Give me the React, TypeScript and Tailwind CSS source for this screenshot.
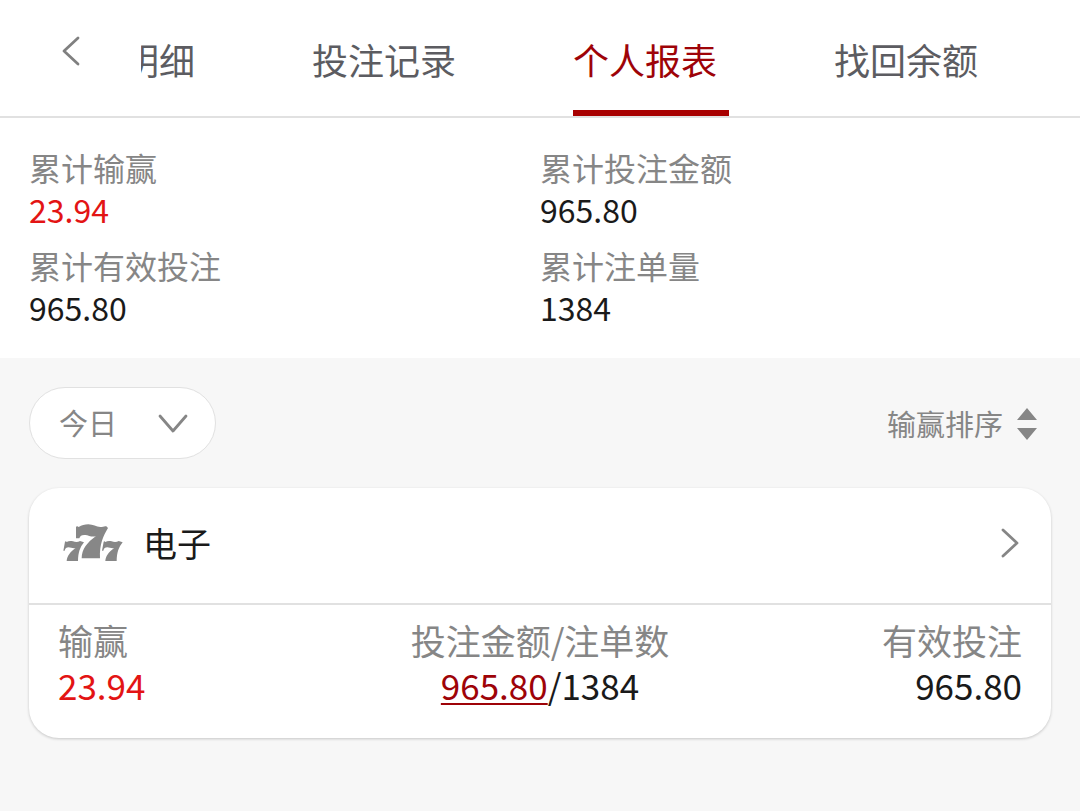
import { useState } from "react"
import clsx from "clsx"

const tabs = ["明细", "投注记录", "个人报表", "找回余额"]

const summary = [
  { label: "累计输赢", value: "23.94", highlight: true },
  { label: "累计投注金额", value: "965.80" },
  { label: "累计有效投注", value: "965.80" },
  { label: "累计注单量", value: "1384" },
]

interface ChevronProps {
  points: string
  viewBox: string
  className?: string
}

function Chevron({ points, viewBox, className = "" }: ChevronProps) {
  return (
    <svg viewBox={viewBox} className={className} fill="none" stroke="currentColor" aria-hidden="true">
      <polyline points={points} strokeWidth="2.8" strokeLinecap="round" strokeLinejoin="round" />
    </svg>
  )
}

const SEVEN =
  "M0 7Q4 4 8 8C17 3 26 0 37 0C51 0 61 8 73 8C81 8 85 4 91 6L96 11C82 34 70 60 72 102H17C17 74 34 54 60 35C50 40 38 33 28 32C18 31 12 34 10 42H0Z"
const SMALL_SEVEN =
  "M5 3Q8 0 10 4C16 0 23 0 29 2C36 5 44 5 50 1L62 5C50 20 44 36 44 61H10C11 46 20 34 37 22C29 24 22 20 16 20C9 20 6 22 4 30H0Z"

function SlotsIcon() {
  return (
    <svg viewBox="0 0 180 114" className="h-[38px] w-[60px] text-[#878787]" fill="currentColor" aria-hidden="true">
      <path d={SMALL_SEVEN} transform="translate(1 50)" />
      <path d={SMALL_SEVEN} transform="translate(117 50)" />
      <path d={SEVEN} transform="translate(39 1)" stroke="#fff" strokeWidth="5" paintOrder="stroke" />
    </svg>
  )
}

function Header() {
  const [active, setActive] = useState("个人报表")

  return (
    <header className="flex border-b-2 border-[#e1e1e1] bg-white">
      <button aria-label="返回" className="flex h-[102px] w-[141px] shrink-0 items-center justify-center text-[#808080]">
        <Chevron points="16,2 2,15 16,28" viewBox="0 0 18 30" className="h-[30px] w-[18px]" />
      </button>
      <nav className="min-w-0 flex-1 overflow-hidden">
        {/* the tab strip is scrolled, so its first tab is partly cut off */}
        <div className="-ml-[18px] flex gap-[105px]">
          {tabs.map((tab) => (
            <button
              key={tab}
              onClick={() => setActive(tab)}
              className={clsx(
                "h-[116px] shrink-0 border-b-[6px] pt-2 pr-3 text-4xl whitespace-nowrap",
                tab === active ? "border-[#a80000] text-[#9e0308]" : "border-transparent text-[#5c5c61]"
              )}
            >
              {tab}
            </button>
          ))}
        </div>
      </nav>
    </header>
  )
}

function Summary() {
  return (
    <dl className="grid grid-cols-2 gap-y-[14px] bg-white px-[29px] pt-7 pb-[30px]">
      {summary.map((item) => (
        <div key={item.label}>
          <dt className="text-[32px] leading-[42px] text-[#868686]">{item.label}</dt>
          <dd className={clsx("text-[32px] leading-[42px]", item.highlight ? "text-[#e31414]" : "text-[#1a1a1a]")}>
            {item.value}
          </dd>
        </div>
      ))}
    </dl>
  )
}

function Filters() {
  return (
    <div className="flex items-center justify-between pr-[14px]">
      <div className="relative text-[#868686]">
        <select
          aria-label="日期"
          defaultValue="今日"
          className="h-[72px] w-[187px] appearance-none rounded-full border border-[#e1e1e1] bg-white pl-[29px] text-[29px]"
        >
          <option>今日</option>
          <option>昨日</option>
        </select>
        <Chevron
          points="2,2 15,17 28,2"
          viewBox="0 0 30 19"
          className="pointer-events-none absolute top-[27px] right-7 h-[19px] w-[30px]"
        />
      </div>
      <button className="flex items-center gap-[14px] pt-0.5 text-[29px] text-[#868686]">
        输赢排序
        <svg viewBox="0 0 20 32" className="h-8 w-5" fill="currentColor" aria-hidden="true">
          <path d="M10 0L20 12H0ZM0 20H20L10 32Z" />
        </svg>
      </button>
    </div>
  )
}

function ReportCard() {
  return (
    <section className="rounded-[30px] bg-white shadow-[0_1px_3px_rgba(0,0,0,0.2)]">
      <button className="flex h-[117px] w-full items-center border-b-2 border-[#e1e1e1] pr-8 pb-1.5 pl-[34px]">
        <SlotsIcon />
        <span className="ml-5 text-[34px] text-[#1a1a1a]">电子</span>
        <Chevron points="2,2 16,15 2,28" viewBox="0 0 18 30" className="ml-auto h-[30px] w-[18px] text-[#868686]" />
      </button>
      <dl className="grid grid-cols-[1fr_auto_1fr] px-[29px] pt-3 pb-[31px]">
        <div>
          <dt className="text-[35px] leading-[45px] text-[#868686]">输赢</dt>
          <dd className="text-[35px] leading-[45px] text-[#e31414]">23.94</dd>
        </div>
        <div className="text-center">
          <dt className="text-[35px] leading-[45px] text-[#868686]">投注金额/注单数</dt>
          <dd className="text-[35px] leading-[45px] text-[#1a1a1a]">
            <a href="#bets" className="text-[#9e0308] underline decoration-2 underline-offset-3">
              965.80
            </a>
            /1384
          </dd>
        </div>
        <div className="text-right">
          <dt className="text-[35px] leading-[45px] text-[#868686]">有效投注</dt>
          <dd className="text-[35px] leading-[45px] text-[#1a1a1a]">965.80</dd>
        </div>
      </dl>
    </section>
  )
}

export default function App() {
  return (
    <div className="min-h-screen bg-[#f7f7f7] font-['Noto_Sans_CJK_SC',sans-serif]">
      <Header />
      <Summary />
      <main className="flex flex-col gap-[29px] p-[29px]">
        <Filters />
        <ReportCard />
      </main>
    </div>
  )
}
